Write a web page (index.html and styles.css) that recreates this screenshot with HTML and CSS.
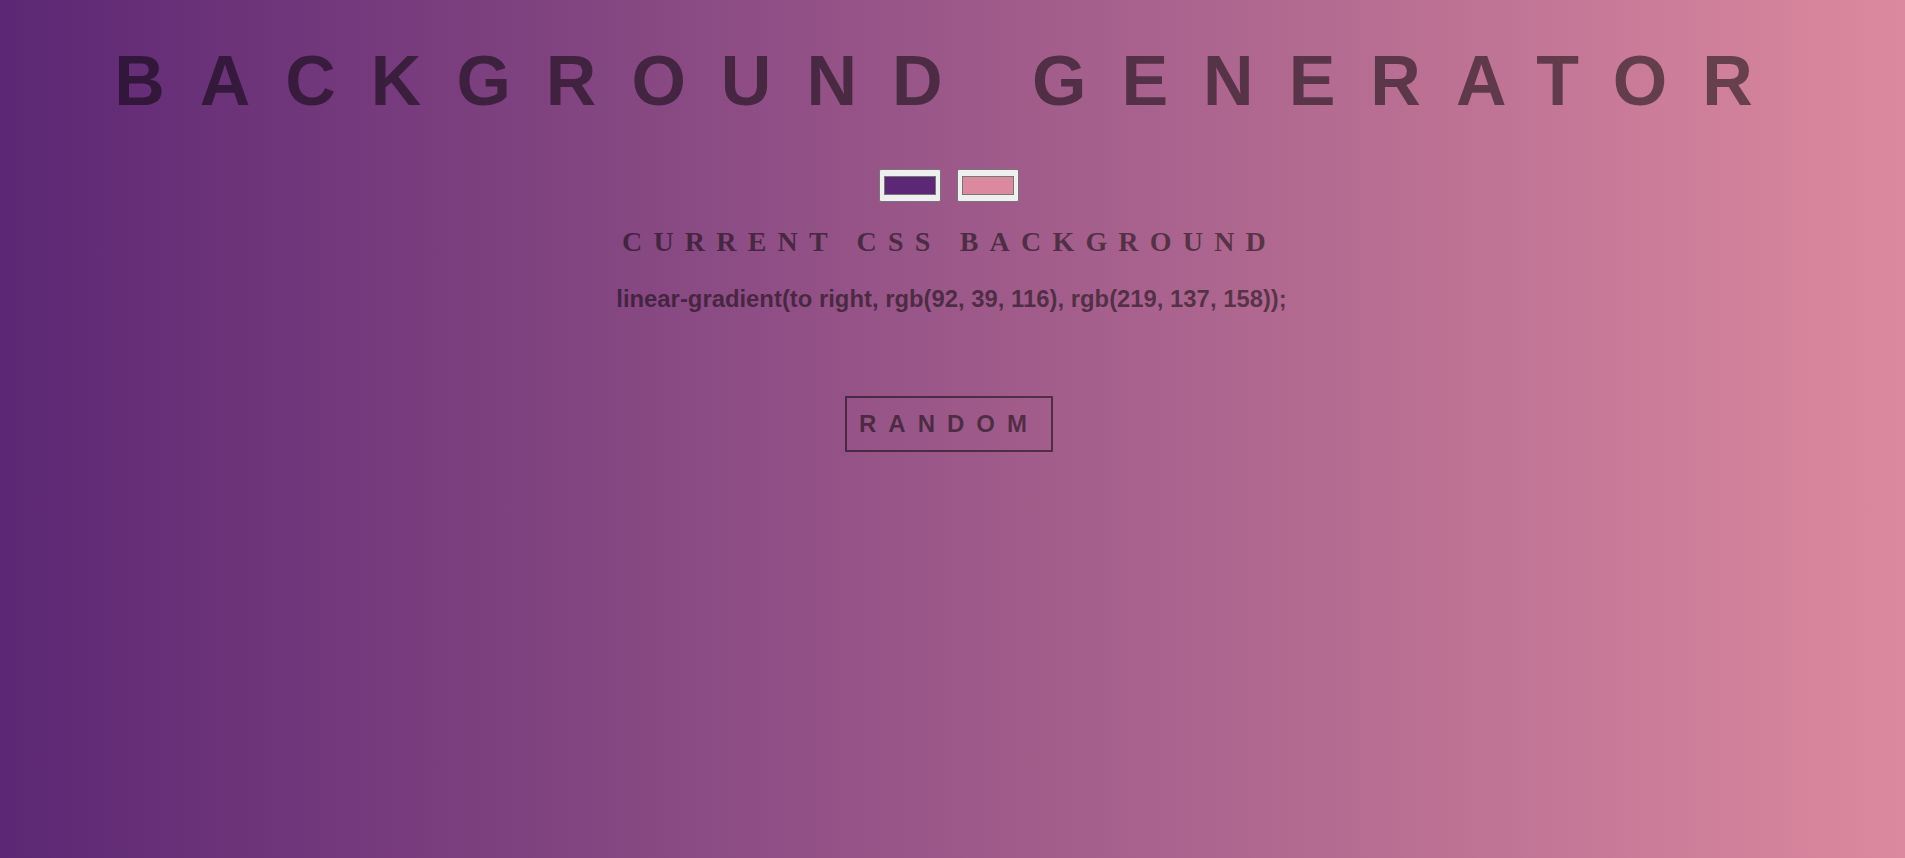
FILE: index.html
```html
<!DOCTYPE html>
<html lang="en">
<head>
<meta charset="utf-8">
<title>Background Generator</title>
<link rel="stylesheet" href="styles.css">
</head>
<body>
<main class="page">
  <h1 class="title">Background Generator</h1>
  <div class="pickers">
    <div class="picker"><span class="swatch" style="background: rgb(92, 39, 116);"></span></div>
    <div class="picker"><span class="swatch" style="background: rgb(219, 137, 158);"></span></div>
  </div>
  <h2 class="subtitle">Current CSS Background</h2>
  <h3 class="css-value">linear-gradient(to right, rgb(92, 39, 116), rgb(219, 137, 158));</h3>
  <button class="random" type="button">Random</button>
</main>
</body>
</html>
```

FILE: styles.css
```css
html {
  min-height: 100%;
  background: linear-gradient(to right, rgb(92, 39, 116), rgb(219, 137, 158));
}

body {
  margin: 0;
  min-height: 100vh;
  background: linear-gradient(to right, rgb(92, 39, 116), rgb(219, 137, 158));
  color: rgba(0, 0, 0, 0.5);
  font-family: "Liberation Sans", Arial, sans-serif;
}

.page {
  display: flex;
  flex-direction: column;
  align-items: center;
  text-align: center;
}

.title {
  margin: 41px 0 0;
  padding-right: 3px;
  font-family: "Liberation Sans", Arial, sans-serif;
  font-size: 70px;
  font-weight: 700;
  line-height: normal;
  letter-spacing: 0.5em;
  text-transform: uppercase;
  white-space: nowrap;
}

.pickers {
  display: flex;
  gap: 16px;
  margin-top: 48px;
  padding-right: 7px;
}

.picker {
  box-sizing: border-box;
  width: 62px;
  height: 33px;
  padding: 6px 4px;
  background: #efefef;
  border: 1px solid #767676;
  border-radius: 2px;
  display: flex;
}

.swatch {
  flex: 1;
  border: 1px solid #777777;
}

.subtitle {
  margin: 24px 0 0;
  padding-right: 6px;
  font-family: "Liberation Serif", "Times New Roman", serif;
  font-size: 28px;
  font-weight: 700;
  line-height: normal;
  letter-spacing: 0.4em;
  text-transform: uppercase;
}

.css-value {
  margin: 27px 0 0;
  padding-right: 2px;
  font-family: "Liberation Sans", Arial, sans-serif;
  font-size: 23.85px;
  font-weight: 700;
  line-height: normal;
}

.random {
  margin: 83px 7px 0 0;
  padding: 12px 12px;
  background: transparent;
  border: 2px solid rgba(0, 0, 0, 0.5);
  color: rgba(0, 0, 0, 0.5);
  font-family: "Liberation Sans", Arial, sans-serif;
  font-size: 24px;
  font-weight: 700;
  line-height: normal;
  letter-spacing: 0.5em;
  text-transform: uppercase;
  cursor: pointer;
}
```
